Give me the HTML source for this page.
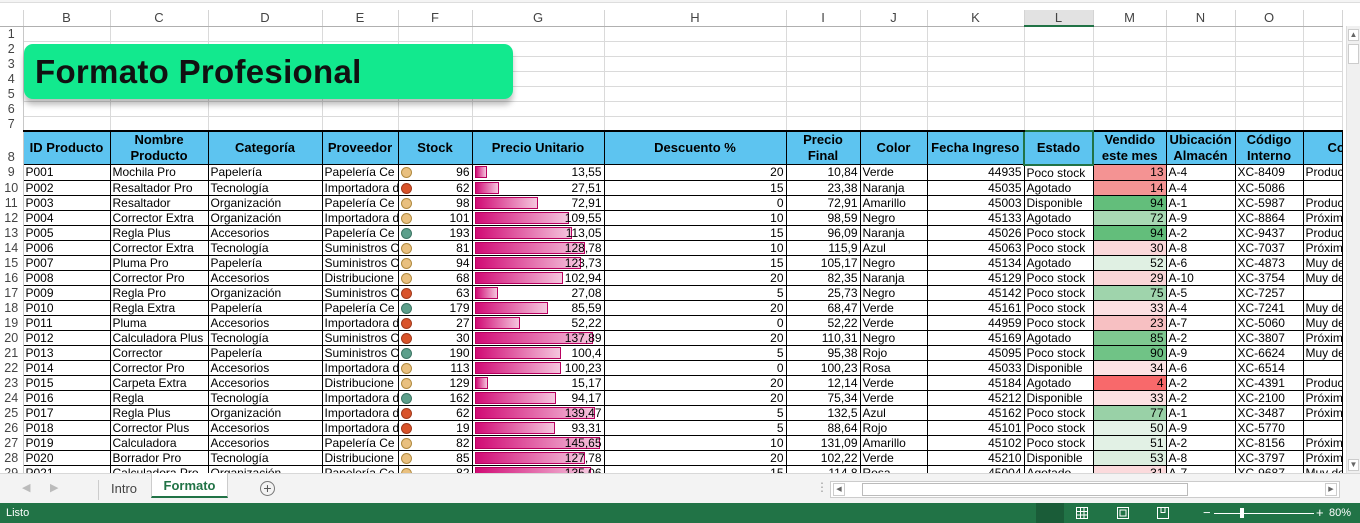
<!DOCTYPE html>
<html><head><meta charset="utf-8"><style>
*{margin:0;padding:0;box-sizing:border-box}
body{width:1360px;height:523px;overflow:hidden;background:#fff;font-family:"Liberation Sans",Arial,sans-serif;position:relative}
#grid{position:absolute;left:0;top:10px;width:1346px;height:463px;overflow:hidden}
table{border-collapse:collapse;table-layout:fixed;width:1342px;font-size:12px;color:#000}
td{height:15px;line-height:14px;padding:0 2px;white-space:nowrap;overflow:hidden;border:1px solid #000}
tr.e td{border:1px solid #dadada}
tr.e td.n,td.n{border:none;border-right:1px solid #c8c8c8;color:#444;text-align:center;padding:0;font-size:12.5px;background:#fff}
tr.h td{height:16px;border:none;border-right:1px solid #d4d4d4;border-bottom:1px solid #b0b0b0;text-align:center;color:#444;font-size:13px}
tr.h td.sel{background:#e2e2e2;border-bottom:2px solid #217346}
tr.t td{height:33px;background:#5dc4f0;font-weight:bold;font-size:13px;text-align:center;line-height:16px;border-top:2px solid #000;white-space:normal}
tr.t td.nw{white-space:nowrap}
tr.t td.n{background:#fff;border-top:none;vertical-align:bottom;font-weight:normal;color:#444}
.r{text-align:right}
td.f{position:relative;text-align:right}
.dot{position:absolute;left:2px;top:2px;width:11px;height:11px;border-radius:50%;border:1px solid #b08a40}
.t1{background:#e9c07f}.t2{background:#d9542b;border-color:#a03a1c}.t3{background:#5c9f8b;border-color:#3d7564}
td.g{position:relative;text-align:right}
.bar{position:absolute;left:2px;top:1px;height:12px;background:linear-gradient(90deg,#d10b75,#f5c6de);border:1px solid #b8005f}
.g span{position:relative}
</style></head><body>
<div style="position:absolute;left:0;top:0;width:1360px;height:3px;border-bottom:1px solid #ddd;background:#f4f4f4"></div>
<div id="grid"><table>
<colgroup><col style="width:23px"><col style="width:87px"><col style="width:98px"><col style="width:114px"><col style="width:76px"><col style="width:74px"><col style="width:132px"><col style="width:182px"><col style="width:74px"><col style="width:67px"><col style="width:97px"><col style="width:69px"><col style="width:73px"><col style="width:69px"><col style="width:68px"><col style="width:39px"></colgroup>
<tr class="h"><td class="n" style="border-bottom:1px solid #b0b0b0"></td><td>B</td><td>C</td><td>D</td><td>E</td><td>F</td><td>G</td><td>H</td><td>I</td><td>J</td><td>K</td><td class="sel">L</td><td>M</td><td>N</td><td>O</td><td></td></tr>
<tr class="e"><td class="n">1</td><td></td><td></td><td></td><td></td><td></td><td></td><td></td><td></td><td></td><td></td><td></td><td></td><td></td><td></td><td></td></tr>
<tr class="e"><td class="n">2</td><td></td><td></td><td></td><td></td><td></td><td></td><td></td><td></td><td></td><td></td><td></td><td></td><td></td><td></td><td></td></tr>
<tr class="e"><td class="n">3</td><td></td><td></td><td></td><td></td><td></td><td></td><td></td><td></td><td></td><td></td><td></td><td></td><td></td><td></td><td></td></tr>
<tr class="e"><td class="n">4</td><td></td><td></td><td></td><td></td><td></td><td></td><td></td><td></td><td></td><td></td><td></td><td></td><td></td><td></td><td></td></tr>
<tr class="e"><td class="n">5</td><td></td><td></td><td></td><td></td><td></td><td></td><td></td><td></td><td></td><td></td><td></td><td></td><td></td><td></td><td></td></tr>
<tr class="e"><td class="n">6</td><td></td><td></td><td></td><td></td><td></td><td></td><td></td><td></td><td></td><td></td><td></td><td></td><td></td><td></td><td></td></tr>
<tr class="e"><td class="n">7</td><td></td><td></td><td></td><td></td><td></td><td></td><td></td><td></td><td></td><td></td><td></td><td></td><td></td><td></td><td></td></tr>
<tr class="t"><td class="n">8</td><td class="nw">ID Producto</td><td>Nombre Producto</td><td>Categoría</td><td>Proveedor</td><td>Stock</td><td>Precio Unitario</td><td>Descuento %</td><td>Precio Final</td><td>Color</td><td class="nw">Fecha Ingreso</td><td style="border:2px solid #217346">Estado</td><td>Vendido este mes</td><td>Ubicación Almacén</td><td>Código Interno</td><td class="nw" style="text-align:left;padding-left:24px">Co</td></tr>
<tr><td class="n">9</td><td>P001</td><td>Mochila Pro</td><td>Papelería</td><td>Papelería Ce</td><td class="f"><i class="dot t1"></i>96</td><td class="g"><i class="bar" style="width:12px"></i><span>13,55</span></td><td class="r">20</td><td class="r">10,84</td><td>Verde</td><td class="r">44935</td><td>Poco stock</td><td class="r" style="background:#f49393">13</td><td>A-4</td><td>XC-8409</td><td>Producto</td></tr>
<tr><td class="n">10</td><td>P002</td><td>Resaltador Pro</td><td>Tecnología</td><td>Importadora d</td><td class="f"><i class="dot t2"></i>62</td><td class="g"><i class="bar" style="width:24px"></i><span>27,51</span></td><td class="r">15</td><td class="r">23,38</td><td>Naranja</td><td class="r">45035</td><td>Agotado</td><td class="r" style="background:#f49494">14</td><td>A-4</td><td>XC-5086</td><td></td></tr>
<tr><td class="n">11</td><td>P003</td><td>Resaltador</td><td>Organización</td><td>Papelería Ce</td><td class="f"><i class="dot t1"></i>98</td><td class="g"><i class="bar" style="width:63px"></i><span>72,91</span></td><td class="r">0</td><td class="r">72,91</td><td>Amarillo</td><td class="r">45003</td><td>Disponible</td><td class="r" style="background:#63be7b">94</td><td>A-1</td><td>XC-5987</td><td>Producto</td></tr>
<tr><td class="n">12</td><td>P004</td><td>Corrector Extra</td><td>Organización</td><td>Importadora d</td><td class="f"><i class="dot t1"></i>101</td><td class="g"><i class="bar" style="width:94px"></i><span>109,55</span></td><td class="r">10</td><td class="r">98,59</td><td>Negro</td><td class="r">45133</td><td>Agotado</td><td class="r" style="background:#a8d9b4">72</td><td>A-9</td><td>XC-8864</td><td>Próximo</td></tr>
<tr><td class="n">13</td><td>P005</td><td>Regla Plus</td><td>Accesorios</td><td>Papelería Ce</td><td class="f"><i class="dot t3"></i>193</td><td class="g"><i class="bar" style="width:97px"></i><span>113,05</span></td><td class="r">15</td><td class="r">96,09</td><td>Naranja</td><td class="r">45026</td><td>Poco stock</td><td class="r" style="background:#63be7b">94</td><td>A-2</td><td>XC-9437</td><td>Producto</td></tr>
<tr><td class="n">14</td><td>P006</td><td>Corrector Extra</td><td>Tecnología</td><td>Suministros O</td><td class="f"><i class="dot t1"></i>81</td><td class="g"><i class="bar" style="width:110px"></i><span>128,78</span></td><td class="r">10</td><td class="r">115,9</td><td>Azul</td><td class="r">45063</td><td>Poco stock</td><td class="r" style="background:#fbd8da">30</td><td>A-8</td><td>XC-7037</td><td>Próximo</td></tr>
<tr><td class="n">15</td><td>P007</td><td>Pluma Pro</td><td>Papelería</td><td>Suministros O</td><td class="f"><i class="dot t1"></i>94</td><td class="g"><i class="bar" style="width:106px"></i><span>123,73</span></td><td class="r">15</td><td class="r">105,17</td><td>Negro</td><td class="r">45134</td><td>Agotado</td><td class="r" style="background:#e0f0e3">52</td><td>A-6</td><td>XC-4873</td><td>Muy de</td></tr>
<tr><td class="n">16</td><td>P008</td><td>Corrector Pro</td><td>Accesorios</td><td>Distribucione</td><td class="f"><i class="dot t1"></i>68</td><td class="g"><i class="bar" style="width:88px"></i><span>102,94</span></td><td class="r">20</td><td class="r">82,35</td><td>Naranja</td><td class="r">45129</td><td>Poco stock</td><td class="r" style="background:#fad5d7">29</td><td>A-10</td><td>XC-3754</td><td>Muy de</td></tr>
<tr><td class="n">17</td><td>P009</td><td>Regla Pro</td><td>Organización</td><td>Suministros O</td><td class="f"><i class="dot t2"></i>63</td><td class="g"><i class="bar" style="width:23px"></i><span>27,08</span></td><td class="r">5</td><td class="r">25,73</td><td>Negro</td><td class="r">45142</td><td>Poco stock</td><td class="r" style="background:#9fd4ac">75</td><td>A-5</td><td>XC-7257</td><td></td></tr>
<tr><td class="n">18</td><td>P010</td><td>Regla Extra</td><td>Papelería</td><td>Papelería Ce</td><td class="f"><i class="dot t3"></i>179</td><td class="g"><i class="bar" style="width:73px"></i><span>85,59</span></td><td class="r">20</td><td class="r">68,47</td><td>Verde</td><td class="r">45161</td><td>Poco stock</td><td class="r" style="background:#fce0e2">33</td><td>A-4</td><td>XC-7241</td><td>Muy de</td></tr>
<tr><td class="n">19</td><td>P011</td><td>Pluma</td><td>Accesorios</td><td>Importadora d</td><td class="f"><i class="dot t2"></i>27</td><td class="g"><i class="bar" style="width:45px"></i><span>52,22</span></td><td class="r">0</td><td class="r">52,22</td><td>Verde</td><td class="r">44959</td><td>Poco stock</td><td class="r" style="background:#f7c0c2">23</td><td>A-7</td><td>XC-5060</td><td>Muy de</td></tr>
<tr><td class="n">20</td><td>P012</td><td>Calculadora Plus</td><td>Tecnología</td><td>Suministros O</td><td class="f"><i class="dot t2"></i>30</td><td class="g"><i class="bar" style="width:118px"></i><span>137,89</span></td><td class="r">20</td><td class="r">110,31</td><td>Negro</td><td class="r">45169</td><td>Agotado</td><td class="r" style="background:#7fc891">85</td><td>A-2</td><td>XC-3807</td><td>Próximo</td></tr>
<tr><td class="n">21</td><td>P013</td><td>Corrector</td><td>Papelería</td><td>Suministros O</td><td class="f"><i class="dot t3"></i>190</td><td class="g"><i class="bar" style="width:86px"></i><span>100,4</span></td><td class="r">5</td><td class="r">95,38</td><td>Rojo</td><td class="r">45095</td><td>Poco stock</td><td class="r" style="background:#70c386">90</td><td>A-9</td><td>XC-6624</td><td>Muy de</td></tr>
<tr><td class="n">22</td><td>P014</td><td>Corrector Pro</td><td>Accesorios</td><td>Importadora d</td><td class="f"><i class="dot t1"></i>113</td><td class="g"><i class="bar" style="width:86px"></i><span>100,23</span></td><td class="r">0</td><td class="r">100,23</td><td>Rosa</td><td class="r">45033</td><td>Disponible</td><td class="r" style="background:#fce2e4">34</td><td>A-6</td><td>XC-6514</td><td></td></tr>
<tr><td class="n">23</td><td>P015</td><td>Carpeta Extra</td><td>Accesorios</td><td>Distribucione</td><td class="f"><i class="dot t1"></i>129</td><td class="g"><i class="bar" style="width:13px"></i><span>15,17</span></td><td class="r">20</td><td class="r">12,14</td><td>Verde</td><td class="r">45184</td><td>Agotado</td><td class="r" style="background:#f8696b">4</td><td>A-2</td><td>XC-4391</td><td>Producto</td></tr>
<tr><td class="n">24</td><td>P016</td><td>Regla</td><td>Tecnología</td><td>Importadora d</td><td class="f"><i class="dot t3"></i>162</td><td class="g"><i class="bar" style="width:81px"></i><span>94,17</span></td><td class="r">20</td><td class="r">75,34</td><td>Verde</td><td class="r">45212</td><td>Disponible</td><td class="r" style="background:#fce0e2">33</td><td>A-2</td><td>XC-2100</td><td>Próximo</td></tr>
<tr><td class="n">25</td><td>P017</td><td>Regla Plus</td><td>Organización</td><td>Importadora d</td><td class="f"><i class="dot t2"></i>62</td><td class="g"><i class="bar" style="width:120px"></i><span>139,47</span></td><td class="r">5</td><td class="r">132,5</td><td>Azul</td><td class="r">45162</td><td>Poco stock</td><td class="r" style="background:#99d1a7">77</td><td>A-1</td><td>XC-3487</td><td>Próximo</td></tr>
<tr><td class="n">26</td><td>P018</td><td>Corrector Plus</td><td>Accesorios</td><td>Importadora d</td><td class="f"><i class="dot t2"></i>19</td><td class="g"><i class="bar" style="width:80px"></i><span>93,31</span></td><td class="r">5</td><td class="r">88,64</td><td>Rojo</td><td class="r">45101</td><td>Poco stock</td><td class="r" style="background:#e4f2e7">50</td><td>A-9</td><td>XC-5770</td><td></td></tr>
<tr><td class="n">27</td><td>P019</td><td>Calculadora</td><td>Accesorios</td><td>Papelería Ce</td><td class="f"><i class="dot t1"></i>82</td><td class="g"><i class="bar" style="width:125px"></i><span>145,65</span></td><td class="r">10</td><td class="r">131,09</td><td>Amarillo</td><td class="r">45102</td><td>Poco stock</td><td class="r" style="background:#e2f1e5">51</td><td>A-2</td><td>XC-8156</td><td>Próximo</td></tr>
<tr><td class="n">28</td><td>P020</td><td>Borrador Pro</td><td>Tecnología</td><td>Distribucione</td><td class="f"><i class="dot t1"></i>85</td><td class="g"><i class="bar" style="width:110px"></i><span>127,78</span></td><td class="r">20</td><td class="r">102,22</td><td>Verde</td><td class="r">45210</td><td>Disponible</td><td class="r" style="background:#dceedf">53</td><td>A-8</td><td>XC-3797</td><td>Próximo</td></tr>
<tr><td class="n">29</td><td>P021</td><td>Calculadora Pro</td><td>Organización</td><td>Papelería Ce</td><td class="f"><i class="dot t1"></i>82</td><td class="g"><i class="bar" style="width:116px"></i><span>135,06</span></td><td class="r">15</td><td class="r">114,8</td><td>Rosa</td><td class="r">45004</td><td>Agotado</td><td class="r" style="background:#fbdadc">31</td><td>A-7</td><td>XC-9687</td><td>Muy de</td></tr>
</table></div>
<div style="position:absolute;left:24px;top:44px;width:489px;height:55px;background:#12e98e;border-radius:9px;box-shadow:0 6px 6px rgba(0,0,0,0.25)"><div style="position:absolute;left:11px;top:9px;font-size:33px;font-weight:bold;color:#111;white-space:nowrap;letter-spacing:0.3px">Formato Profesional</div></div>
<div style="position:absolute;left:1346px;top:26px;width:14px;height:447px;background:#f0f0f0;border-left:1px solid #ddd"><div style="margin:3px 1px;height:12px;border:1px solid #ccc;background:#fff;font-size:8px;color:#666;text-align:center;line-height:10px">▲</div><div style="margin:0 1px;height:20px;border:1px solid #ccc;background:#fff"></div><div style="position:absolute;bottom:2px;left:1px;width:11px;height:12px;border:1px solid #ccc;background:#fff;font-size:8px;color:#666;text-align:center;line-height:10px">▼</div></div>
<div style="position:absolute;left:0;top:473px;width:1360px;height:30px;background:#f3f3f3;border-top:1px solid #d8d8d8">
<span style="position:absolute;left:22px;top:7px;color:#bbb;font-size:11px">◀</span><span style="position:absolute;left:50px;top:7px;color:#bbb;font-size:11px">▶</span>
<div style="position:absolute;left:98px;top:6px;width:1px;height:20px;background:#ccc"></div>
<span style="position:absolute;left:111px;top:7px;font-size:13px;color:#444">Intro</span>
<div style="position:absolute;left:151px;top:-1px;width:77px;height:25px;background:#fff;border-bottom:2px solid #217346;border-left:1px solid #ccc;border-right:1px solid #ccc;font-weight:bold;color:#217346;font-size:13px;text-align:center;line-height:26px">Formato</div>
<div style="position:absolute;left:260px;top:7px;width:15px;height:15px;border:1px solid #777;border-radius:50%;text-align:center;line-height:13px;color:#555;font-size:14px">+</div>
<span style="position:absolute;left:816px;top:6px;color:#999;font-size:12px">⋮</span>
<div style="position:absolute;left:830px;top:7px;width:510px;height:17px;background:#fff;border:1px solid #ccc"><div style="position:absolute;left:2px;top:1px;width:12px;height:13px;border:1px solid #ccc;font-size:7px;color:#666;line-height:12px;text-align:center">◀</div><div style="position:absolute;left:31px;top:1px;width:326px;height:13px;border:1px solid #bbb;background:#fff"></div><div style="position:absolute;right:2px;top:1px;width:12px;height:13px;border:1px solid #ccc;font-size:7px;color:#666;line-height:12px;text-align:center">▶</div></div>
</div>
<div style="position:absolute;left:0;top:503px;width:1360px;height:20px;background:#217346;color:#fff;font-size:11px">
<span style="position:absolute;left:6px;top:4px">Listo</span>
<div style="position:absolute;left:1036px;top:0;width:28px;height:20px;background:#1a5c38"></div>
<svg style="position:absolute;left:1076px;top:4px" width="12" height="12" viewBox="0 0 12 12" fill="none" stroke="#fff" stroke-width="1"><rect x=".5" y=".5" width="11" height="11"/><path d="M4.5 0v12M8 0v12M0 4.5h12M0 8h12"/></svg>
<svg style="position:absolute;left:1117px;top:4px" width="12" height="12" viewBox="0 0 12 12" fill="none" stroke="#fff"><rect x=".5" y=".5" width="11" height="11"/><rect x="3" y="3" width="6" height="6"/></svg>
<svg style="position:absolute;left:1157px;top:4px" width="12" height="12" viewBox="0 0 12 12" fill="none" stroke="#fff"><path d="M.5 .5h11v11h-11zM4 .5v5h4v-5"/></svg>
<span style="position:absolute;left:1203px;top:2px;font-size:13px">−</span>
<div style="position:absolute;left:1214px;top:10px;width:100px;height:1px;background:#fff"></div>
<div style="position:absolute;left:1240px;top:5px;width:4px;height:10px;background:#fff"></div>
<span style="position:absolute;left:1316px;top:2px;font-size:13px">+</span>
<span style="position:absolute;left:1329px;top:4px">80%</span>
</div>
</body></html>
